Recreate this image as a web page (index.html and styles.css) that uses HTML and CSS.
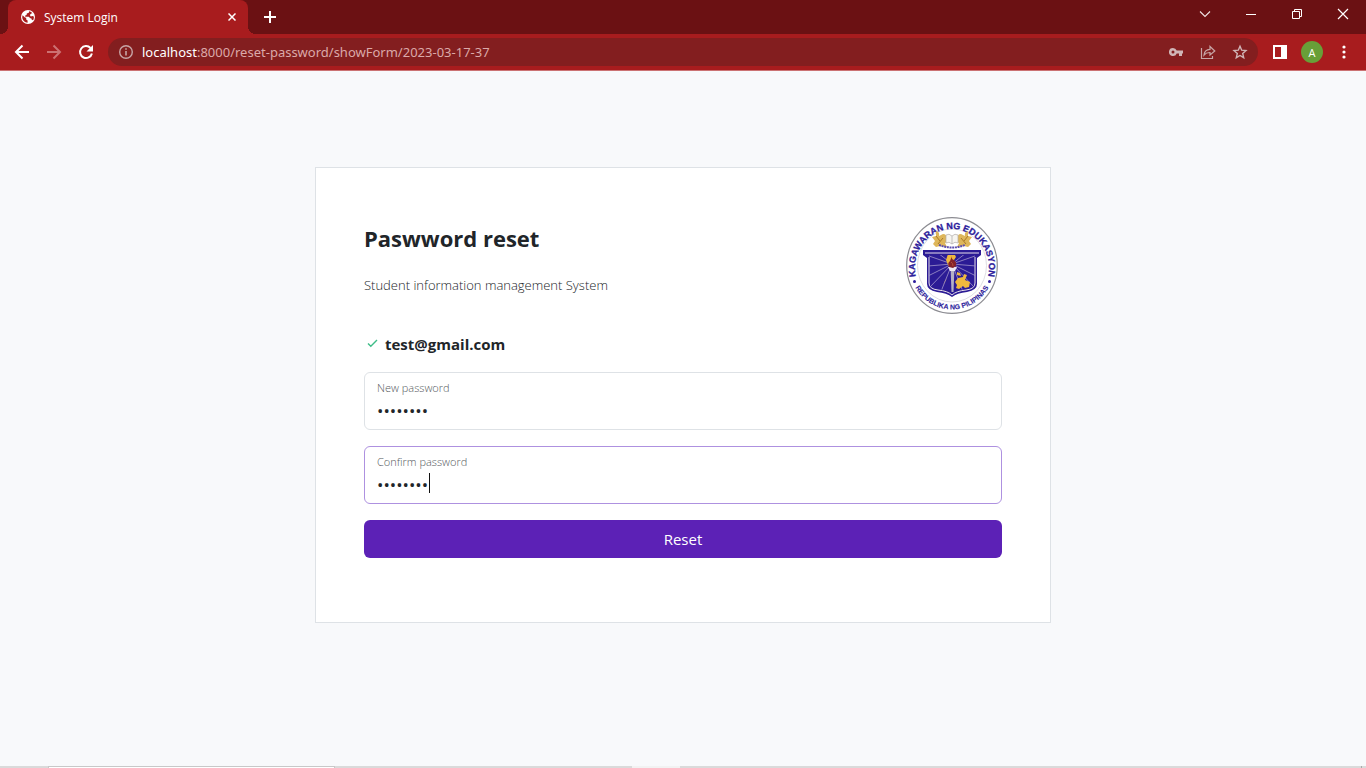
FILE: index.html
```html
<!DOCTYPE html>
<html lang="en">
<head>
<meta charset="utf-8">
<title>System Login</title>
<link rel="stylesheet" href="styles.css">
</head>
<body>
<header class="browser">
  <div class="tabstrip">
    <div class="tab">
      <svg class="favicon" width="16" height="16" viewBox="0 0 16 16" aria-hidden="true"><circle cx="8" cy="8" r="7" fill="#fff"/><path d="M2.600 6.200 5 8.600l1.200.2v1.600l1.400 1.200v2.200C4.800 13.600 2.300 11.200 2.200 8zM9.200 2.200l-.4 1.600-2 .6-.2 1.600-1.400.6v1.200h3.600l1.400 1.400h1l.6 1.600 1.200.4c.8-1.200 1-2.400.8-3.800l-1.400-.4-1.600.6-1-1.600 1.400-1.400 1.200-.4c-.8-1-2-1.800-3.200-2z" fill="#a81c1e"/></svg>
      <span class="tab-title">System Login</span>
      <button class="tab-close" aria-label="Close tab"><svg width="8" height="8" viewBox="0 0 8 8"><path d="m.5.5 7 7m0-7-7 7" stroke="#fff" stroke-width="1.500"/></svg></button>
    </div>
    <button class="new-tab" aria-label="New tab"><svg width="12" height="12" viewBox="0 0 12 12"><path d="M6 0v12M0 6h12" stroke="#fff" stroke-width="2"/></svg></button>
    <div class="window-controls">
      <button aria-label="Search tabs"><svg width="12" height="12" viewBox="0 0 12 12"><path d="m1 3.500 5 5 5-5" fill="none" stroke="#f0e4e4" stroke-width="1.100"/></svg></button>
      <button aria-label="Minimize"><svg width="12" height="12" viewBox="0 0 12 12"><path d="M1 6.500h10" stroke="#fff"/></svg></button>
      <button aria-label="Restore"><svg width="12" height="12" viewBox="0 0 12 12"><path d="M1.500 3.500h7v7h-7zM3.500 3.500v-2h7v7h-2" fill="none" stroke="#fff"/></svg></button>
      <button aria-label="Close"><svg width="12" height="12" viewBox="0 0 12 12"><path d="m1 1 10 10M11 1 1 11" stroke="#fff" stroke-width="1.200"/></svg></button>
    </div>
  </div>
  <div class="toolbar">
    <button class="tool" aria-label="Back"><svg width="16" height="16" viewBox="0 0 16 16"><path d="M15 8H2m6.500-6.500L2 8l6.500 6.500" fill="none" stroke="#fff" stroke-width="2"/></svg></button>
    <button class="tool" aria-label="Forward"><svg width="16" height="16" viewBox="0 0 16 16"><path d="M1 8h13M7.500 1.500 14 8l-6.500 6.500" fill="none" stroke="#cc7172" stroke-width="2"/></svg></button>
    <button class="tool" aria-label="Reload"><svg width="16" height="16" viewBox="0 0 16 16"><path d="M13.900 9.500A6 6 0 1 1 12.500 4" fill="none" stroke="#fff" stroke-width="2"/><path d="M15 1v6.500H8.500z" fill="#fff"/></svg></button>
    <div class="omnibox">
      <svg width="16" height="16" viewBox="0 0 16 16" aria-hidden="true"><circle cx="8" cy="8" r="6.300" fill="none" stroke="#c7a5a6" stroke-width="1.400"/><path d="M8 7v4.500M8 4.200v1.600" stroke="#c7a5a6" stroke-width="1.600"/></svg>
      <span class="url"><b>localhost</b>:8000/reset-password/showForm/2023-03-17-37</span>
      <button aria-label="Saved passwords"><svg width="16" height="16" viewBox="0 0 16 16"><path fill-rule="evenodd" d="M5 4a4 4 0 1 0 3.700 5.400H11V12h3V9.400h1V6.600H8.700A4 4 0 0 0 5 4zm0 2.500a1.500 1.500 0 1 1 0 3 1.500 1.500 0 0 1 0-3z" fill="#d0b5b6"/></svg></button>
      <button aria-label="Share"><svg width="16" height="16" viewBox="0 0 16 16"><path d="M1.500 4v10.500h11V12M4 11c.4-3.800 2.600-5.600 6-5.700V2.500L14.800 7 10 11V8.500C7.400 8.400 5.600 9.100 4 11z" fill="none" stroke="#c7a5a6" stroke-width="1.200"/></svg></button>
      <button aria-label="Bookmark"><svg width="16" height="16" viewBox="0 0 16 16"><path d="m8 2.200 1.700 4 4.300.4-3.300 2.900 1 4.200L8 11.500l-3.700 2.200 1-4.200L2 6.600l4.300-.4z" fill="none" stroke="#d0b5b6" stroke-width="1.400"/></svg></button>
    </div>
    <button class="tool" aria-label="Side panel"><svg width="16" height="16" viewBox="0 0 16 16"><path fill-rule="evenodd" d="M1 1h14v14H1zm2 2v10h6V3z" fill="#fff"/></svg></button>
    <button class="tool" aria-label="Profile"><span class="avatar">A</span></button>
    <button class="tool" aria-label="Menu"><svg width="16" height="16" viewBox="0 0 16 16"><g fill="#fff"><circle cx="8" cy="3" r="1.600"/><circle cx="8" cy="8" r="1.600"/><circle cx="8" cy="13" r="1.600"/></g></svg></button>
  </div>
</header>

<main class="page">
  <form class="card">
    <div class="card-head">
      <div>
        <h1>Paswword reset</h1>
        <p>Student information management System</p>
      </div>
      <svg class="seal" width="100" height="100" viewBox="-4 -1 100 100" role="img" aria-label="Kagawaran ng Edukasyon seal">
        <defs>
          <path id="arc-top" d="M10.500 62A37 39 0 1 1 81.500 62"/>
          <path id="arc-bottom" d="M5 60A42.500 44 0 0 0 87 60"/>
          <clipPath id="shield-clip"><path d="M23 38h46v29q0 4-9 5-10 1-14 5-4-4-14-5-9-1-9-5z"/></clipPath>
        </defs>
        <ellipse cx="46" cy="48.500" rx="45.300" ry="47.800" fill="#fff" stroke="#8c8c92" stroke-width="1.200"/>
        <ellipse cx="46" cy="48.500" rx="34.500" ry="36.500" fill="#fff" stroke="#d5d5da" stroke-width=".8"/>
        <text class="seal-top"><textPath href="#arc-top" startOffset="50%">KAGAWARAN NG EDUKASYON</textPath></text>
        <text class="seal-bottom"><textPath href="#arc-bottom" startOffset="50%">REPUBLIKA NG PILIPINAS</textPath></text>
        <circle cx="8.500" cy="64.500" r="1.500" fill="#2c1c9b"/><circle cx="83.500" cy="64.500" r="1.500" fill="#2c1c9b"/>
        <path d="M30 14q4 1 3 5l4-2q4 0 3 4l3 3-4 2 2 4-7-1-4 1-3-3 2-3-3-4 4-1zM62 14q-4 1-3 5l-4-2q-4 0-3 4l-3 3 4 2-2 4 7-1 4 1 3-3-2-3 3-4-4-1z" fill="#deb65a"/>
        <path d="m30 19 4 5m-2 3 5-6m25-2-4 5m2 3-5-6" stroke="#a97928" stroke-width="1"/>
        <path d="M40 18q3-2 6 1 3-3 6-1v8q-3-2-6 1-3-3-6-1z" fill="#f7f5f0" stroke="#b1acaa" stroke-width=".7"/><path d="M46 19v8" stroke="#aaa" stroke-width=".7"/>
        <path d="M33 28q13 5 26 0" fill="none" stroke="#5b4db0" stroke-width="2" stroke-dasharray="2 .7"/>
        <path d="M17 33h58v5l-4 3v26q0 6-10 8-10 1-15 5-5-4-15-5-10-2-10-8V41l-4-3z" fill="#2b1b95"/>
        <path d="M19 36h54M23 40v26q0 6 9 7 10 1 14 5 4-4 14-5 9-1 9-7V40" fill="none" stroke="#e7dfe9" stroke-width="1"/>
        <g clip-path="url(#shield-clip)">
          <path d="M46 47 23 39m23 8L32 36m14 11L60 36M46 47l23-8M46 47l-24 2m24-2 24 2M46 47 22 59m24-12 24 12M46 47 24 70m22-23 22 23M46 47 34 77m12-30 12 30" stroke="#a397cb" stroke-width=".8"/>
          <path d="m42 37 6-1 2 4-2 3 1 5-3 3-4-3-2-5zM51 55l3 1 1 3-4-1zM52 61l5-1 1-3 3 1-2 5 5 2-1 5-4 1-2-2-4 3-3-1 1-3-2-3zM39 64l2-3-4 7z" fill="#f0b83e"/>
        </g>
        <path d="M44.500 50h4l-1 25h-2z" fill="#b5b0c5"/><path d="M42 50h9l-2 4h-5z" fill="#eee9f2"/>
        <path d="M46 39q-1 3 2 4 3 2 2 6l-3 2-4-1q-2-4 1-6z" fill="#85242b"/><path d="M45 45q2 1 2 4" stroke="#b34d39" fill="none"/>
      </svg>
    </div>
    <div class="account">
      <svg width="16" height="16" viewBox="0 0 16 16" aria-hidden="true"><path d="m4 7.500 2.800 2.800L13 4" fill="none" stroke="#3fbd88" stroke-width="1.400"/></svg>
      <strong>test@gmail.com</strong>
    </div>
    <div class="field">
      <label for="new-password">New password</label>
      <input id="new-password" type="password" value="password">
    </div>
    <div class="field focused">
      <label for="confirm-password">Confirm password</label>
      <input id="confirm-password" type="password" value="password">
      <span class="caret"></span>
    </div>
    <button class="reset" type="submit">Reset</button>
  </form>
</main>
<footer class="taskbar"><span class="task-search"></span><span class="task-active"></span><span class="task-edge"></span></footer>
</body>
</html>
```
FILE: styles.css
```css
* { box-sizing: border-box; }
body {
  margin: 0;
  min-height: 100vh;
  display: flex;
  flex-direction: column;
  background: #f8f9fb;
  color: #212529;
  font-family: "Open Sans", "Noto Sans", sans-serif;
}
button { border: 0; padding: 0; background: none; font: inherit; color: inherit; }
svg { display: block; flex: none; }

.browser { border-bottom: 1px solid #cb7273; background: #a81c1e; color: #fff; }
.tabstrip { display: flex; height: 34px; padding-left: 8px; background: #6b1113; }
.tab {
  position: relative;
  display: flex;
  align-items: center;
  gap: 8px;
  width: 240px;
  padding: 0 12px;
  border-radius: 8px 8px 0 0;
  background: #a81c1e;
  font-size: 12px;
}
.tab::before, .tab::after {
  content: "";
  position: absolute;
  bottom: 0;
  width: 8px;
  height: 8px;
}
.tab::before { right: 100%; background: radial-gradient(circle at 0 0, #6b1113 8px, #a81c1e 8px); }
.tab::after { left: 100%; background: radial-gradient(circle at 100% 0, #6b1113 8px, #a81c1e 8px); }
.tab-title { flex: 1; }
.new-tab { display: grid; place-items: center; width: 44px; }
.window-controls { display: flex; margin-left: auto; height: 28px; }
.window-controls button { display: grid; place-items: center; width: 46px; }

.toolbar { display: flex; align-items: center; height: 36px; padding: 0 6px; }
.tool { display: grid; place-items: center; width: 32px; height: 28px; }
.omnibox {
  flex: 1;
  display: flex;
  align-items: center;
  gap: 16px;
  height: 28px;
  margin: 0 6px;
  padding: 0 10px;
  border-radius: 14px;
  background: #831e1f;
}
.url { flex: 1; margin-left: -8px; font-family: "Noto Sans", sans-serif; font-size: 13px; color: #dba9a9; }
.url b { font-weight: 400; color: #fff; }
.avatar {
  display: grid;
  place-items: center;
  width: 22px;
  height: 22px;
  border-radius: 50%;
  background: #689f38;
  font-size: 11px;
}

.page { flex: 1; padding: 96px 16px 0; }
.card {
  max-width: 736px;
  margin: 0 auto;
  padding: 48px 48px 64px;
  border: 1px solid #dee2e6;
  background: #fff;
}
.card-head { display: flex; justify-content: space-between; }
h1 { margin: 8px 0 20px; font-size: 22px; line-height: 28px; font-weight: 700; }
p { margin: 0; font-size: 13px; font-weight: 300; line-height: 26px; }
.seal-top, .seal-bottom {
  font-family: "Liberation Sans", Arial, sans-serif;
  font-weight: 700;
  fill: #2c1c9b;
  stroke: #2c1c9b;
  text-anchor: middle;
}
.seal-top { font-size: 9px; stroke-width: .3px; }
.seal-bottom { font-size: 7px; stroke-width: .1px; }
.account { display: flex; align-items: center; gap: 5px; margin: 16px 0; font-size: 15px; line-height: 24px; }

.field {
  position: relative;
  height: 58px;
  margin-bottom: 16px;
  padding: 8px 12px;
  border: 1px solid #dee2e6;
  border-radius: 6px;
}
.field label { display: block; font-size: 11px; font-weight: 300; line-height: 14px; color: #55595d; }
.field input {
  display: block;
  width: 100%;
  height: 30px;
  border: 0;
  padding: 0;
  outline: 0;
  background: none;
  color: #212529;
  font: 17px "Open Sans", sans-serif;
}
.focused { border-color: #ae91e0; }
.caret { position: absolute; left: 64px; top: 26px; width: 1px; height: 20px; background: #111; }
.reset {
  width: 100%;
  height: 38px;
  border-radius: 6px;
  background: #5c21b6;
  color: #fff;
  font-size: 15px;
}

.taskbar { display: flex; height: 2px; background: #dadada; }
.task-search { width: 287px; margin-left: 48px; border: solid #c8c8c8; border-width: 1px 1px 0; background: #fff; }
.task-active { width: 48px; margin-left: 297px; background: #f2f2f2; }
.task-edge { width: 1px; margin-left: auto; margin-right: 4px; background: #aaa; }
```
